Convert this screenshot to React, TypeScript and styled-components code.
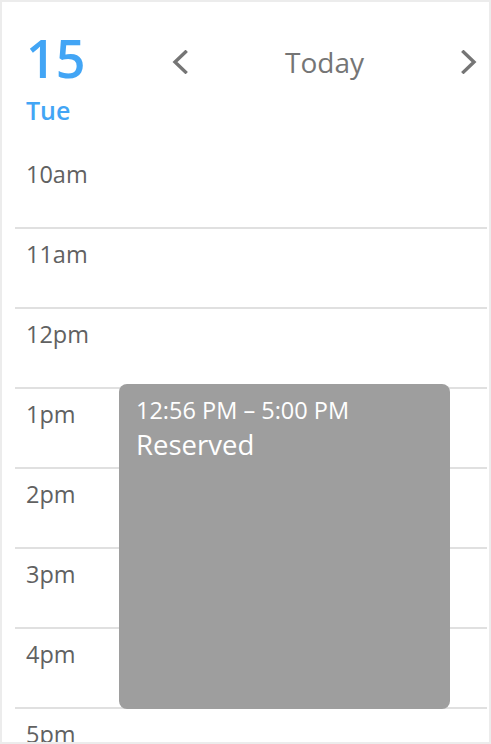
import React from 'react'
import styled, { createGlobalStyle } from 'styled-components'

const GlobalStyle = createGlobalStyle`
    html, body {
        margin: 0;
        padding: 0;
        background: #ffffff;
    }
    body {
        font-family: "Open Sans", "Liberation Sans", sans-serif;
    }
`

const hours = ['10am', '11am', '12pm', '1pm', '2pm', '3pm', '4pm', '5pm', '6pm', '7pm']
const ROW = 80

const Chevron: React.FC<{ dir: 'left' | 'right' }> = ({ dir }) => (
    <svg width="16" height="24" viewBox="0 0 16 24">
        <path
            d={dir === 'left' ? 'M13.5 2 L3 12 L13.5 22' : 'M2.5 2 L13 12 L2.5 22'}
            fill="none"
            stroke="#757575"
            strokeWidth="3.4"
            strokeLinecap="square"
            strokeLinejoin="miter"
        />
    </svg>
)

const DayView: React.FC = () => {
    // 12:56 PM -> 5:00 PM, first visible row starts at 10am
    const startMin = (12 - 10) * 60 + 56
    const endMin = (17 - 10) * 60
    return (
        <Frame>
            <Header>
                <DateBlock>
                    <DayNumber>15</DayNumber>
                    <DayName>Tue</DayName>
                </DateBlock>
                <Nav>
                    <NavButton aria-label="previous"><Chevron dir="left" /></NavButton>
                    <TodayLabel>Today</TodayLabel>
                    <NavButton aria-label="next"><Chevron dir="right" /></NavButton>
                </Nav>
            </Header>
            <Timeline>
                {hours.map((h) => (
                    <HourRow key={h}>
                        <HourLabel>{h}</HourLabel>
                    </HourRow>
                ))}
                <Event
                    style={{
                        top: (startMin / 60) * ROW,
                        height: ((endMin - startMin) / 60) * ROW,
                    }}
                >
                    <EventTime>12:56 PM – 5:00 PM</EventTime>
                    <EventTitle>Reserved</EventTitle>
                </Event>
            </Timeline>
        </Frame>
    )
}

const Frame = styled.div`
    width: 491px;
    height: 744px;
    box-sizing: border-box;
    border: 2px solid #ececec;
    overflow: hidden;
    background: #ffffff;
`
const Header = styled.div`
    height: 147px;
    display: flex;
    align-items: flex-start;
    padding: 0 12px 0 24px;
    box-sizing: border-box;
`
const DateBlock = styled.div`
    width: 146px;
    display: flex;
    flex-direction: column;
    padding-top: 26px;
    color: #42a5f5;
    font-weight: 600;
`
const DayNumber = styled.div`
    font-size: 52px;
    line-height: 60px;
`
const DayName = styled.div`
    margin-top: 7px;
    font-size: 25px;
    line-height: 30px;
`
const Nav = styled.div`
    flex: 1;
    height: 40px;
    margin-top: 40px;
    display: flex;
    align-items: center;
    justify-content: space-between;
`
const NavButton = styled.div`
    width: 16px;
    height: 24px;
    display: flex;
`
const TodayLabel = styled.div`
    font-size: 28px;
    line-height: 36px;
    color: #757575;
`
const Timeline = styled.div`
    position: relative;
    margin: 0 2px 0 13px;
`
const HourRow = styled.div`
    height: ${ROW}px;
    box-sizing: border-box;
    border-bottom: 2px solid #e0e0e0;
    padding: 10px 0 0 11px;
`
const HourLabel = styled.div`
    font-size: 23.5px;
    line-height: 30px;
    color: #616161;
`
const Event = styled.div`
    position: absolute;
    left: 104px;
    width: 331px;
    box-sizing: border-box;
    border-radius: 8px;
    background: #9e9e9e;
    padding: 12px 17px 0;
    color: #ffffff;
`
const EventTime = styled.div`
    font-size: 23.5px;
    line-height: 28px;
`
const EventTitle = styled.div`
    margin-top: 5px;
    font-size: 27.5px;
    line-height: 32px;
`

const App: React.FC = () => (
    <>
        <GlobalStyle />
        <DayView />
    </>
)

export default App
